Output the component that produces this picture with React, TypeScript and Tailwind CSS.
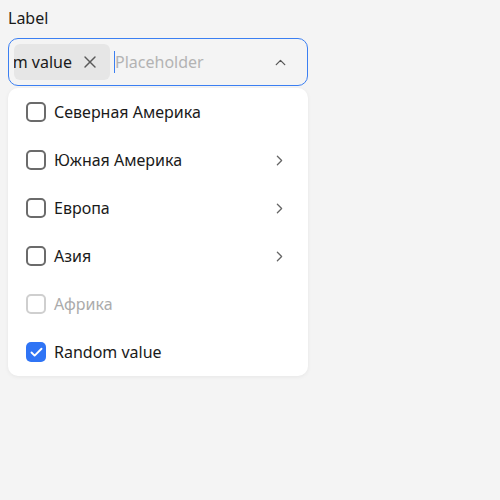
import { X, ChevronUp, ChevronRight, Check } from 'lucide-react';

interface Item {
  label: string;
  checked?: boolean;
  disabled?: boolean;
  nested?: boolean;
}

const items: Item[] = [
  { label: 'Северная Америка' },
  { label: 'Южная Америка', nested: true },
  { label: 'Европа', nested: true },
  { label: 'Азия', nested: true },
  { label: 'Африка', disabled: true },
  { label: 'Random value', checked: true },
];

export default function App() {
  return (
    <div className="min-h-[500px] w-[500px] bg-[#f4f4f4] px-2 pt-[7px] text-[#1a1a1a]" style={{ fontFamily: '"Noto Sans", sans-serif' }}>
      <div className="text-[16px] leading-[22px] mb-[9px]">Label</div>

      <div className="w-[300px] h-[48px] rounded-[10px] border border-[#3b7ff2] flex items-center pl-[5px] pr-[18px]">
        <div className="h-[36px] w-[96px] rounded-[6px] bg-[#e6e6e6] overflow-hidden flex items-center justify-end pr-[10px] shrink-0">
          <span className="whitespace-nowrap shrink-0 text-[16px]">Random value</span>
          <X size={20} strokeWidth={1.7} className="ml-[8px] shrink-0 text-[#5a5a5a]" />
        </div>
        <div className="ml-[4px] w-px h-[22px] bg-[#3b7ff2]" />
        <span className="text-[16px] text-[#b3b3b3] flex-1">Placeholder</span>
        <ChevronUp size={17} strokeWidth={1.8} className="text-[#555]" />
      </div>

      <div className="mt-[2px] w-[300px] rounded-[10px] bg-white shadow-[0_1px_4px_rgba(0,0,0,0.06)]">
        {items.map((it) => (
          <div key={it.label} className="h-[48px] flex items-center pl-[18px] pr-[20px]">
            {it.checked ? (
              <div className="w-[20px] h-[20px] rounded-[5px] bg-[#2f74f5] flex items-center justify-center">
                <Check size={15} strokeWidth={3} className="text-white" />
              </div>
            ) : (
              <div className={`w-[20px] h-[20px] rounded-[5px] border-2 ${it.disabled ? 'border-[#cfcfcf]' : 'border-[#6b6b6b]'}`} />
            )}
            <span className={`ml-[8px] flex-1 text-[16px] ${it.disabled ? 'text-[#ababab]' : 'text-[#1a1a1a]'}`}>{it.label}</span>
            {it.nested && <ChevronRight size={17} strokeWidth={1.8} className="text-[#666]" />}
          </div>
        ))}
      </div>
    </div>
  );
}
